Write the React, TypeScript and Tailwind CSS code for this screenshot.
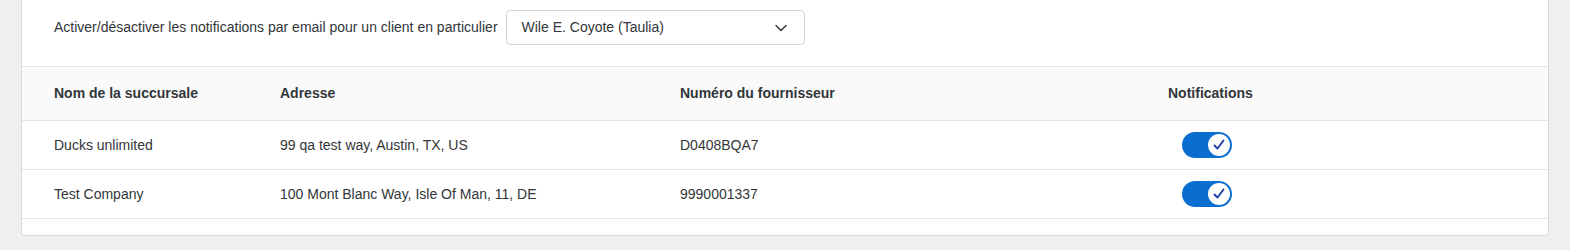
const rows = [
  { name: "Ducks unlimited", address: "99 qa test way, Austin, TX, US", supplier: "D0408BQA7" },
  { name: "Test Company", address: "100 Mont Blanc Way, Isle Of Man, 11, DE", supplier: "9990001337" },
];

function Toggle() {
  return (
    <div className="ml-[14px] flex h-[26px] w-[50px] items-center justify-end rounded-full bg-[#0a6ed1] pr-[2px]">
      <div className="flex h-[22px] w-[22px] items-center justify-center rounded-full bg-white">
        <svg width="14" height="14" viewBox="0 0 14 14" fill="none">
          <path d="M2.5 7.5 L5.5 10.5 L11.5 2.5" stroke="#1b3fa8" strokeWidth="1.9" strokeLinecap="round" strokeLinejoin="round" />
        </svg>
      </div>
    </div>
  );
}

export default function App() {
  return (
    <div className="min-h-[250px] bg-[#edeff0] pb-[15px] text-[14px] text-[#32363a]" style={{ fontFamily: '"Liberation Sans", Arial, sans-serif' }}>
      <div className="mx-[21px] rounded-b-[4px] border-x border-b border-[#d9d9d9] bg-white pb-[16px]">
        <div className="flex items-center gap-[8px] border-b border-[#e5e5e5] pl-[32px] pt-[10px] pb-[21px]">
          <span>Activer/désactiver les notifications par email pour un client en particulier</span>
          <div className="flex h-[35px] w-[299px] items-center justify-between rounded-[4px] border border-[#d5d5d5] pl-[15px] pr-[16px]">
            <span>Wile E. Coyote (Taulia)</span>
            <svg width="14" height="14" viewBox="0 0 14 14" fill="none">
              <path d="M2 4.5 L7 9.5 L12 4.5" stroke="#32363a" strokeWidth="1.4" strokeLinecap="round" strokeLinejoin="round" />
            </svg>
          </div>
        </div>
        <div className="grid h-[54px] grid-cols-[226px_400px_488px_1fr] items-center border-b border-[#e5e5e5] bg-[#fafafa] px-[32px] font-bold">
          <div>Nom de la succursale</div>
          <div>Adresse</div>
          <div>Numéro du fournisseur</div>
          <div>Notifications</div>
        </div>
        {rows.map((r) => (
          <div key={r.name} className="grid h-[49px] grid-cols-[226px_400px_488px_1fr] items-center border-b border-[#e5e5e5] px-[32px]">
            <div>{r.name}</div>
            <div>{r.address}</div>
            <div>{r.supplier}</div>
            <div>
              <Toggle />
            </div>
          </div>
        ))}
      </div>
    </div>
  );
}
